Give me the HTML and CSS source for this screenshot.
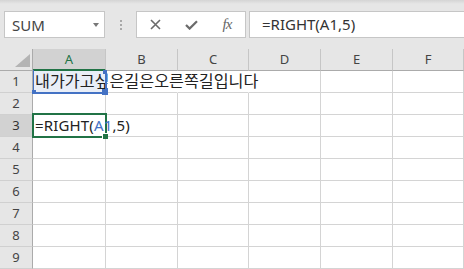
FILE: index.html
```html
<!DOCTYPE html>
<html lang="ko">
<head>
    <meta charset="UTF-8">
    <title>RIGHT</title>
    <link rel="stylesheet" href="styles.css">
</head>
<body>
    <div class="toolbar">
        <div class="namebox">
            <span class="name">SUM</span>
            <span class="arrow"></span>
        </div>
        <div class="grip"><i></i><i></i><i></i></div>
        <div class="fxbox">
            <span class="btn">
                <svg width="11" height="11" viewBox="0 0 11 11"><path d="M1 1 L10 10 M10 1 L1 10" stroke="#6b6b6b" stroke-width="1.6" fill="none"/></svg>
            </span>
            <span class="btn">
                <svg width="13" height="10" viewBox="0 0 13 10"><path d="M1 5 L4.6 8.6 L12 1.2" stroke="#6b6b6b" stroke-width="2.2" fill="none"/></svg>
            </span>
            <span class="btn fx">fx</span>
        </div>
        <div class="formula">=RIGHT(A1,5)</div>
    </div>

    <div class="sheet">
        <div class="corner">
            <svg width="15" height="13" viewBox="0 0 15 13"><polygon points="0,13 15,13 15,0" fill="#b4b4b4"/></svg>
        </div>
        <div class="colhead sel">A</div>
        <div class="colhead">B</div>
        <div class="colhead">C</div>
        <div class="colhead">D</div>
        <div class="colhead">E</div>
        <div class="colhead">F</div>

        <div class="rowhead">1</div>
        <div class="cell ref">
            <span class="text ko">내가가고싶은길은오른쪽길입니다</span>
            <span class="hd hd-tr"></span>
            <span class="hd hd-bl"></span>
            <span class="hd hd-br"></span>
        </div>
        <div class="cell spill"></div>
        <div class="cell spill"></div>
        <div class="cell"></div>
        <div class="cell"></div>
        <div class="cell"></div>

        <div class="rowhead">2</div>
        <div class="cell"></div><div class="cell"></div><div class="cell"></div><div class="cell"></div><div class="cell"></div><div class="cell"></div>

        <div class="rowhead sel">3</div>
        <div class="cell active"><span class="text top">=RIGHT(<span class="ref-text">A1</span>,5)</span><span class="fill"></span></div>
        <div class="cell"></div><div class="cell"></div><div class="cell"></div><div class="cell"></div><div class="cell"></div>

        <div class="rowhead">4</div>
        <div class="cell"></div><div class="cell"></div><div class="cell"></div><div class="cell"></div><div class="cell"></div><div class="cell"></div>
        <div class="rowhead">5</div>
        <div class="cell"></div><div class="cell"></div><div class="cell"></div><div class="cell"></div><div class="cell"></div><div class="cell"></div>
        <div class="rowhead">6</div>
        <div class="cell"></div><div class="cell"></div><div class="cell"></div><div class="cell"></div><div class="cell"></div><div class="cell"></div>
        <div class="rowhead">7</div>
        <div class="cell"></div><div class="cell"></div><div class="cell"></div><div class="cell"></div><div class="cell"></div><div class="cell"></div>
        <div class="rowhead">8</div>
        <div class="cell"></div><div class="cell"></div><div class="cell"></div><div class="cell"></div><div class="cell"></div><div class="cell"></div>
        <div class="rowhead">9</div>
        <div class="cell"></div><div class="cell"></div><div class="cell"></div><div class="cell"></div><div class="cell"></div><div class="cell"></div>
    </div>
</body>
</html>
```

FILE: styles.css
```css
*{
    margin: 0;
    padding: 0;
    box-sizing: border-box;
}
body{
    width: 464px;
    height: 269px;
    overflow: hidden;
    background-color: #e6e6e6;
    font-family: "Noto Sans", "Noto Sans CJK KR", sans-serif;
}

/* 수식 입력줄 */
.toolbar{
    height: 49px;
    display: flex;
    align-items: flex-start;
    padding: 11px 0 0 4px;
    background: linear-gradient(#d4d4d4, #e6e6e6 4px);
}
.namebox{
    width: 101px;
    height: 27px;
    border: 1px solid #c6c6c6;
    background-color: #fff;
    display: flex;
    align-items: center;
    justify-content: space-between;
    padding: 0 5px 0 7px;
}
.namebox .name{
    font-size: 15px;
    color: #444;
}
.namebox .arrow{
    border-left: 3.5px solid transparent;
    border-right: 3.5px solid transparent;
    border-top: 4px solid #777;
}
.grip{
    width: 31px;
    height: 27px;
    display: flex;
    flex-direction: column;
    align-items: center;
    justify-content: center;
    gap: 2px;
}
.grip i{
    width: 2px;
    height: 2px;
    background-color: #a8a8a8;
}
.fxbox{
    width: 110px;
    height: 27px;
    border: 1px solid #c6c6c6;
    background-color: #fff;
    display: flex;
}
.fxbox .btn{
    width: 36px;
    display: flex;
    align-items: center;
    justify-content: center;
}
.fxbox .fx{
    font-family: "Liberation Serif", serif;
    font-style: italic;
    font-size: 15px;
    color: #666;
    letter-spacing: -1px;
}
.formula{
    flex: 1;
    margin: 0 -4px 0 3px;
    height: 27px;
    border: 1px solid #c6c6c6;
    background-color: #fff;
    padding-left: 12px;
    font-size: 15px;
    line-height: 25px;
    color: #333;
}

/* 시트 */
.sheet{
    display: grid;
    grid-template-columns: 33px 73px 72px 71px 72px 72px 71px;
    grid-auto-rows: 22px;
    background-color: #fff;
}
.corner{
    background-color: #e6e6e6;
    border-right: 1px solid #ababab;
    border-bottom: 1px solid #ababab;
    display: flex;
    justify-content: flex-end;
    align-items: flex-end;
    padding: 0 2px 3px 0;
}
.colhead{
    background-color: #e6e6e6;
    border-right: 1px solid #c6c6c6;
    border-bottom: 1px solid #ababab;
    text-align: center;
    font-size: 13px;
    line-height: 21px;
    color: #444;
}
.colhead.sel{
    background-color: #d2d2d2;
    color: #217346;
    border-bottom: 2px solid #217346;
}
.rowhead{
    background-color: #e6e6e6;
    border-right: 1px solid #ababab;
    border-bottom: 1px solid #d0d0d0;
    text-align: center;
    font-size: 13px;
    line-height: 21px;
    color: #444;
}
.rowhead.sel{
    background-color: #d2d2d2;
    color: #333;
}
.cell{
    border-right: 1px solid #d4d4d4;
    border-bottom: 1px solid #d4d4d4;
    padding-left: 2px;
    font-size: 15px;
    line-height: 21px;
    white-space: nowrap;
    color: #222;
}
.cell.spill{
    border-right-color: transparent;
}
.cell .ko{
    font-size: 16.2px;
}
.cell .top{
    position: relative;
    z-index: 2;
    letter-spacing: 0.15px;
}

/* A1 참조 표시 */
.cell.ref{
    position: relative;
    background-color: #e9eef7;
}
.cell.ref::after{
    content: "";
    position: absolute;
    left: 0;
    top: -1px;
    right: -2px;
    bottom: -2px;
    border-left: 1px solid #4472c4;
    border-right: 2px solid #4472c4;
    border-bottom: 2px solid #4472c4;
}
.hd{
    position: absolute;
    z-index: 1;
    background-color: #4472c4;
}
.hd-tr{
    left: 70px;
    top: -1px;
    width: 4px;
    height: 4px;
}
.hd-bl{
    left: -1px;
    top: 19px;
    width: 4px;
    height: 4px;
}
.hd-br{
    left: 69px;
    top: 18px;
    width: 6px;
    height: 6px;
}

/* 활성 셀 A3 */
.cell.active{
    position: relative;
}
.cell.active::after{
    content: "";
    position: absolute;
    left: -1px;
    top: -2px;
    right: -2px;
    bottom: -2px;
    border: 2px solid #217346;
}
.cell.active .fill{
    position: absolute;
    z-index: 1;
    left: 69px;
    top: 18px;
    width: 6px;
    height: 6px;
    background-color: #217346;
    border-left: 1px solid #fff;
    border-top: 1px solid #fff;
}
.ref-text{
    color: #4472c4;
}
```
